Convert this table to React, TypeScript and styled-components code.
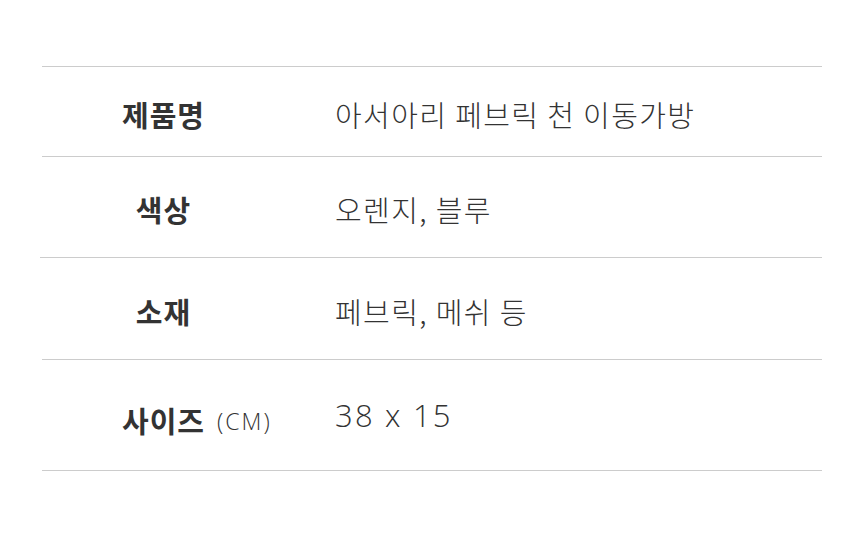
import React from "react";
import styled, { createGlobalStyle } from "styled-components";

interface Spec {
  label: string;
  note?: string;
  value: string;
  height: number;
  numeric?: boolean;
  lineShift?: number;
}

const specs: Spec[] = [
  { label: "제품명", value: "아서아리 페브릭 천 이동가방", height: 89 },
  { label: "색상", value: "오렌지, 블루", height: 100, lineShift: -2 },
  { label: "소재", value: "페브릭, 메쉬 등", height: 101 },
  { label: "사이즈", note: "(CM)", value: "38 x 15", height: 110, numeric: true },
];

const App: React.FC = () => {
  return (
    <>
      <GlobalStyle />
      <Page>
        <SpecTable>
          <Divider />
          {specs.map((spec, index) => (
            <React.Fragment key={index}>
              <SpecRow $height={spec.height}>
                <LabelCell $drop={spec.note ? 10 : 4}>
                  <Label>
                    {spec.label}
                    {spec.note && <Note>{spec.note}</Note>}
                  </Label>
                </LabelCell>
                <Value $numeric={spec.numeric}>{spec.value}</Value>
              </SpecRow>
              <Divider $shift={spec.lineShift} />
            </React.Fragment>
          ))}
        </SpecTable>
      </Page>
    </>
  );
};

export default App;

const GlobalStyle = createGlobalStyle`
  html, body {
    margin: 0;
    padding: 0;
    background: #ffffff;
  }
  body {
    font-family: "Noto Sans CJK KR", "Noto Sans", sans-serif;
    color: #333333;
  }
`;

const Page = styled.div`
  width: 860px;
  height: 549px;
  padding-top: 66px;
  box-sizing: border-box;
`;

const SpecTable = styled.div`
  width: 780px;
  margin-left: 42px;
  display: flex;
  flex-direction: column;
`;

const Divider = styled.div<{ $shift?: number }>`
  height: 1px;
  background: #cccccc;
  margin-left: ${(p) => p.$shift ?? 0}px;
`;

const SpecRow = styled.div<{ $height: number }>`
  height: ${(p) => p.$height}px;
  display: grid;
  grid-template-columns: 242px 1fr;
  align-items: center;
`;

const LabelCell = styled.div<{ $drop: number }>`
  display: flex;
  justify-content: center;
  padding-top: ${(p) => p.$drop}px;
`;

const Label = styled.span`
  font-size: 29px;
  font-weight: 700;
  color: #333333;
  letter-spacing: 1px;
  white-space: nowrap;
  padding-left: 1px;
`;

const Note = styled.span`
  display: inline-block;
  width: 0;
  margin-left: 12px;
  margin-right: -12px;
  font-family: "Open Sans", "Noto Sans", sans-serif;
  font-size: 23px;
  font-weight: 300;
  color: #333333;
  letter-spacing: 2px;
  white-space: nowrap;
  vertical-align: 3px;
`;

const Value = styled.div<{ $numeric?: boolean }>`
  padding-left: 51px;
  font-size: ${(p) => (p.$numeric ? "31px" : "29px")};
  font-weight: 300;
  color: #333333;
  white-space: pre;
  letter-spacing: ${(p) => (p.$numeric ? "2.2px" : "1.4px")};
  padding-top: ${(p) => (p.$numeric ? "0" : "4px")};
  font-family: ${(p) =>
    p.$numeric
      ? `"Open Sans", "Noto Sans", sans-serif`
      : `"Noto Sans CJK KR", sans-serif`};
`;
